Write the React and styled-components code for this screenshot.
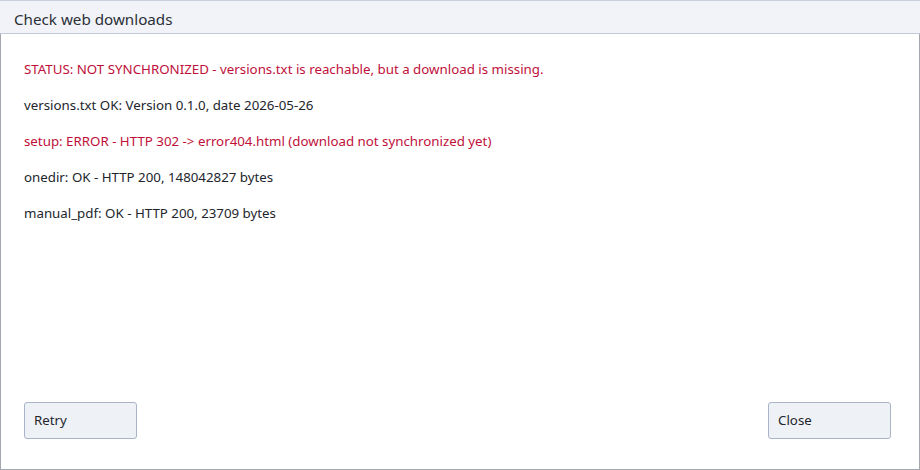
import styled, { createGlobalStyle } from "styled-components";

const Global = createGlobalStyle`
  html, body {
    margin: 0;
    padding: 0;
    background: #ffffff;
  }
  body {
    font-family: "Noto Sans", "Open Sans", sans-serif;
  }
`;

const Window = styled.div`
  width: 920px;
  height: 470px;
  box-sizing: border-box;
  display: flex;
  flex-direction: column;
`;

const TitleBar = styled.div`
  height: 34px;
  box-sizing: border-box;
  background-color: #f1f3f8;
  border-top: 1px solid #c9d0dc;
  border-bottom: 1px solid #c3cad6;
  padding: 3px 14px 0 14px;
  display: flex;
  align-items: center;
  font-size: 15.2px;
  color: #2b2f36;
`;

const Body = styled.div`
  flex: 1;
  display: flex;
  flex-direction: column;
  border-left: 1px solid #a3a7ae;
  border-right: 1px solid #a3a7ae;
  border-bottom: 1px solid #a3a7ae;
  padding: 26px 23px 30px 23px;
`;

const Lines = styled.div`
  flex: 1;
  display: flex;
  flex-direction: column;
  gap: 18px;
`;

const Line = styled.div`
  font-size: 13.3px;
  line-height: 18px;
  color: ${({ error }) => (error ? "#c0103a" : "#22262c")};
`;

const Footer = styled.div`
  display: flex;
  justify-content: space-between;
  align-items: center;
  padding-right: 5px;
`;

const Button = styled.button`
  width: ${({ w }) => w}px;
  height: 37px;
  box-sizing: border-box;
  background-color: #eef1f6;
  border: 1px solid #a9b4c7;
  border-radius: 3px;
  font-family: "Noto Sans", "Open Sans", sans-serif;
  font-size: 13.3px;
  color: #22262c;
  text-align: left;
  padding: 0 9px 2px 9px;
`;

const lines = [
  { text: "STATUS: NOT SYNCHRONIZED - versions.txt is reachable, but a download is missing.", error: true },
  { text: "versions.txt OK: Version 0.1.0, date 2026-05-26" },
  { text: "setup: ERROR - HTTP 302 -> error404.html (download not synchronized yet)", error: true },
  { text: "onedir: OK - HTTP 200, 148042827 bytes" },
  { text: "manual_pdf: OK - HTTP 200, 23709 bytes" },
];

export default function App() {
  return (
    <>
      <Global />
      <Window>
        <TitleBar>Check web downloads</TitleBar>
        <Body>
          <Lines>
            {lines.map((l) => (
              <Line key={l.text} error={l.error}>
                {l.text}
              </Line>
            ))}
          </Lines>
          <Footer>
            <Button w={113}>Retry</Button>
            <Button w={123}>Close</Button>
          </Footer>
        </Body>
      </Window>
    </>
  );
}
